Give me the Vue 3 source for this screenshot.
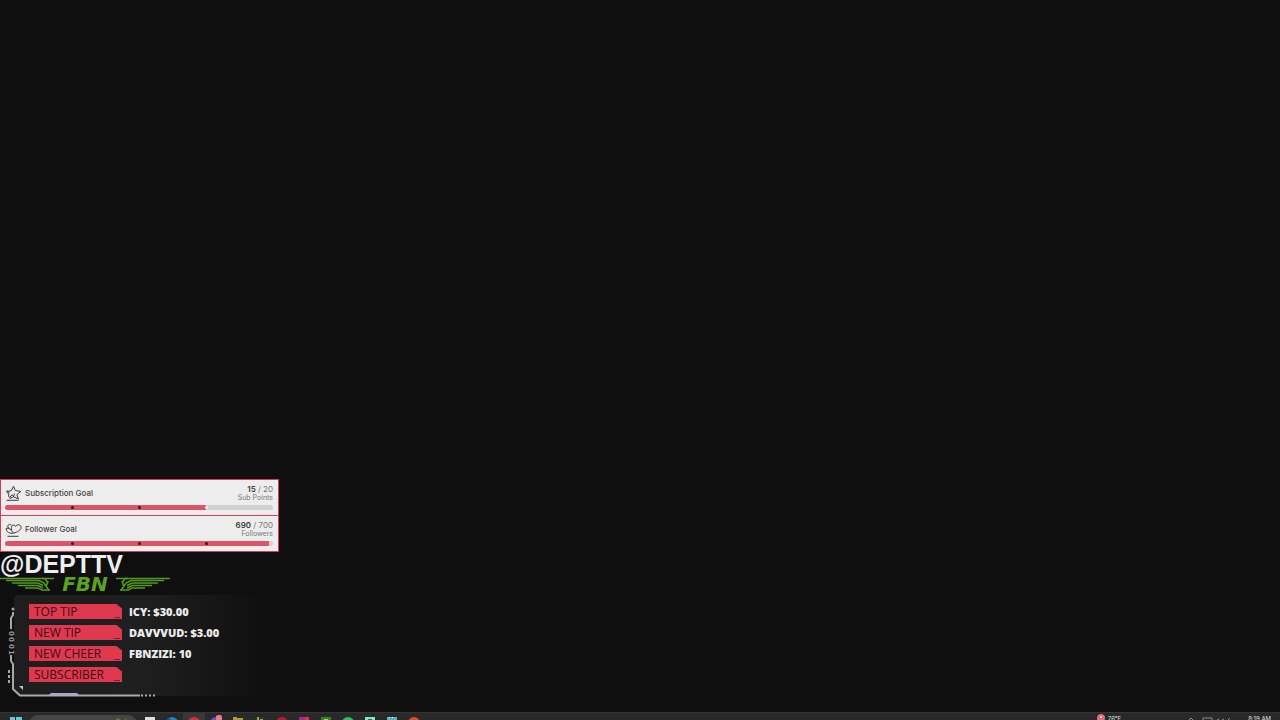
<template>
  <div class="screen">
    <main class="overlay">
      <section class="goals">
        <article v-for="goal in goals" :key="goal.name" class="goal">
          <div class="goal-head">
            <svg v-if="goal.icon === 'star'" class="goal-icon" viewBox="0 0 17 16">
              <path d="M8.5 1.2 10.3 5.6 15.8 6.4 11.8 9.8 13.6 14 8.6 11.8 4.6 13.6M1.3 6.8 6.4 5.6 8.5 1.2" />
              <path d="M1.8 7.6C3.6 8 4.2 9.2 3.4 11L4.8 12.6 7 9.6 8.6 11.6 9.6 8.6M2.2 5.4 4.4 8.2M1.5 15.3H13.5" />
            </svg>
            <svg v-else class="goal-icon" viewBox="0 0 17 16">
              <path d="M8.6 12.2C6.8 10.6 6 8.6 6.4 6.4 7 3.6 9.6 3.4 10.6 5.4 12.2 2.8 15.8 3.5 16.1 6.3 16.1 9.2 12.3 11 8.6 12.2Z" />
              <path d="M6.6 4.2C4.8 2.4 2.4 3.8 2.8 6L4 7.4 1.2 7.2C1 10 2.8 11.8 5.4 12.2L8.4 12.2M4 7.4 6.2 9.2M2.5 15.3H13.5" />
            </svg>
            <h2 class="goal-name">{{ goal.name }}</h2>
            <div class="goal-count">
              <div class="goal-numbers"><b>{{ goal.current }}</b> / {{ goal.target }}</div>
              <div class="goal-unit">{{ goal.unit }}</div>
            </div>
          </div>
          <div class="bar">
            <div class="bar-fill" :style="{ width: (goal.current / goal.target) * 100 + '%' }"></div>
            <span
              v-for="mark in [25, 50, 75]"
              :key="mark"
              class="bar-dot"
              :class="{ reached: (goal.current / goal.target) * 100 <= mark }"
              :style="{ left: mark + '%' }"
            ></span>
          </div>
        </article>
      </section>

      <h1 class="handle">@DEPTTV</h1>

      <div class="team">
        <svg v-for="side in ['left', 'right']" :key="side" class="wing" :class="side" viewBox="0 0 56 16">
          <path d="M0 2.500H45L48 7" />
          <path d="M6 4.500H39L44 7" />
          <path d="M12 7H38L43 9.500" />
          <path d="M18 9.500H38L43 12" />
          <path d="M25 12H38L42 14H50" />
          <path d="M42 2.500H54M44 7 49 14.500M48 5 46 11" />
        </svg>
        <strong class="team-name">FBN</strong>
      </div>

      <section class="panel">
        <svg class="frame" viewBox="0 0 280 110">
          <defs>
            <linearGradient id="panelFade">
              <stop offset="0" stop-color="#1e1e1f" />
              <stop offset="0.5" stop-color="#1f1f20" />
              <stop offset="1" stop-color="#0f0f0f" />
            </linearGradient>
          </defs>
          <path d="M17 3H265V104H20L14 97V6Z" fill="url(#panelFade)" />
          <circle cx="13" cy="17" r="1.5" fill="#a9a9ad" />
          <path class="line" d="M13 20V23L11 26V37M11 63V69L13 72V97L20 103.500H140" />
          <path class="line" d="M141 103.500H155" stroke-dasharray="2 2" />
          <path class="line" d="M9 78V91" stroke-dasharray="3 2" />
          <path d="M48 104 51 101H77L80 104Z" fill="#aba7c6" />
          <path d="M19 94H23V98Z" fill="#c4c4c8" />
          <text class="code" transform="translate(9 39) rotate(90)" x="0 6 13 19" y="0">0001</text>
        </svg>
        <dl class="stats">
          <div v-for="stat in stats" :key="stat.label" class="stat">
            <dt>{{ stat.label }}</dt>
            <dd>{{ stat.value }}</dd>
          </div>
        </dl>
      </section>
    </main>

    <footer class="taskbar">
      <button class="app" aria-label="Start">
        <svg viewBox="0 0 12 12"><path d="M0 0H5V5H0ZM6 0H12V5H6ZM0 6H5V12H0ZM6 6H12V12H6Z" fill="#62cbd0" /></svg>
      </button>
      <button class="search" aria-label="Search">
        <svg viewBox="0 0 108 14">
          <circle cx="8" cy="6" r="2.500" fill="none" stroke="#bdbdbd" />
          <path d="M85 4 89 1 93 4 97 2 100 5V9H85Z" fill="#8b6a2c" />
          <path d="M94 3H100V6H94Z" fill="#55606a" />
        </svg>
      </button>
      <button v-for="app in apps" :key="app.name" class="app" :class="{ open: app.open }" :aria-label="app.name">
        <svg viewBox="0 0 12 12">
          <circle v-if="app.round" cx="6" cy="6" r="6" :fill="app.color" />
          <path v-else d="M1 0H11V12H1Z" :fill="app.color" />
          <path v-if="app.detail" :d="app.detail" :fill="app.accent" />
        </svg>
      </button>
      <button class="weather">
        <svg viewBox="0 0 10 10">
          <circle cx="5" cy="5" r="4" fill="#db6d83" />
          <path d="M4 3H6V5H4Z" fill="#f3c3cb" />
        </svg>
        <span>76°F</span>
      </button>
      <div class="tray">
        <svg viewBox="0 0 46 8">
          <path d="M2 4 4 2 6 4M16 2H25V5H16ZM30 4 32 3M35 4 37 3M41 4 43 2" />
        </svg>
        <time>8:19 AM</time>
      </div>
    </footer>
  </div>
</template>

<script setup>
const goals = [
  { name: 'Subscription Goal', icon: 'star', current: 15, target: 20, unit: 'Sub Points' },
  { name: 'Follower Goal', icon: 'heart', current: 690, target: 700, unit: 'Followers' }
]

const stats = [
  { label: 'TOP TIP', value: 'ICY: $30.00' },
  { label: 'NEW TIP', value: 'DAVVVUD: $3.00' },
  { label: 'NEW CHEER', value: 'FBNZIZI: 10' },
  { label: 'SUBSCRIBER', value: '' }
]

const apps = [
  { name: 'Task view', color: '#dededc' },
  { name: 'Edge', color: '#2482bd', round: true, detail: 'M1 3 4 1V4Z', accent: '#1a4a70' },
  { name: 'Opera', color: '#d6303f', round: true, open: true },
  { name: 'Chat', color: '#6657bb', round: true, detail: 'M6-1 8-2H11L12 0V3H6Z', accent: '#e77b8b' },
  { name: 'Files', color: '#b7963b', detail: 'M5 0H11V1H5Z', accent: '#2a2a2a' },
  { name: 'Editor', color: '#303030', detail: 'M3 0H5V8H3ZM6 2H9V4H6Z', accent: '#a69850' },
  { name: 'Music', color: '#c01431', round: true },
  { name: 'Video', color: '#a32a86', detail: 'M7 0H11V4H7Z', accent: '#d33a51' },
  { name: 'Games', color: '#367f28', detail: 'M4 2H8V4H4Z', accent: '#9dcf83' },
  { name: 'Spotify', color: '#35bd69', round: true },
  { name: 'Streamlabs', color: '#80e6c5', detail: 'M4 2H8V4H4Z', accent: '#37685c' },
  { name: 'Notepad', color: '#67aebd', detail: 'M3 0H4V1H3ZM6 0H7V1H6Z', accent: '#d9eef0' },
  { name: 'Recorder', color: '#cf5424', round: true }
]
</script>

<style>
body {
  background: #0f0f0f;
}
</style>

<style scoped>
.screen {
  height: 100vh;
  display: flex;
  flex-direction: column;
  overflow: hidden;
  background: #0f0f0f;
  font-family: Inter, "Liberation Sans", sans-serif;
}

.overlay {
  margin-top: auto;
  width: 280px;
  max-width: 100%;
}

.goals {
  margin-right: 1px;
  border-bottom: 1px solid #d83b58;
}

.goal {
  border: 1px solid #d83b58;
  border-bottom: none;
  padding: 1px 5px 5px 4px;
  background: #eeedee;
}

.goal-head {
  display: flex;
  align-items: center;
  height: 24px;
}

.goal-icon {
  width: 17px;
  height: 16px;
  margin-right: 3px;
  fill: none;
  stroke: #3c3a3b;
  stroke-width: 1;
}

.goal-name {
  margin: 0;
  font-size: 8px;
  line-height: 10px;
  font-weight: 500;
  color: #454345;
}

.goal-count {
  margin-left: auto;
  text-align: right;
  color: #777578;
}

.goal-numbers {
  font-size: 8px;
  line-height: 10px;
}

.goal-numbers b {
  font-weight: 600;
  color: #3c3a3c;
}

.goal-unit {
  font-size: 7px;
  line-height: 8px;
}

.bar {
  position: relative;
  height: 5px;
  border-radius: 3px;
  background: #d1d0d2;
}

.bar-fill {
  height: 100%;
  border-radius: 3px 0 0 3px;
  background: #de5464;
}

.bar-dot {
  position: absolute;
  top: 1px;
  width: 3px;
  height: 3px;
  margin-left: -1px;
  border-radius: 50%;
  background: #2b1519;
}

.bar-dot.reached {
  background: #f7f5f6;
}

.handle {
  margin: 0;
  font: bold 25px/24px "Liberation Sans", Arial, sans-serif;
  color: #eeeeee;
}

.team {
  display: flex;
  width: 170px;
  height: 16px;
}

.wing {
  width: 56px;
  height: 16px;
  fill: none;
  stroke: #56991f;
  stroke-width: 1.5;
}

.wing.right {
  order: 2;
  transform: scaleX(-1);
}

.team-name {
  flex: 1;
  order: 1;
  display: flex;
  justify-content: center;
  font: italic bold 20px/16px "DejaVu Sans", sans-serif;
  color: #5ba31d;
}

.panel {
  position: relative;
  padding: 12px 8px 20px 29px;
  margin-bottom: 10px;
}

.frame {
  position: absolute;
  top: 0;
  left: 0;
  width: 280px;
  height: 110px;
}

.line {
  fill: none;
  stroke: #a9a9ad;
  stroke-width: 2;
}

.code {
  font: bold 7px "DejaVu Sans", sans-serif;
  fill: #98989c;
}

.stats {
  position: relative;
  display: grid;
  gap: 6px;
  margin: 0;
  font-family: "Open Sans", "Noto Sans", sans-serif;
  font-size: 12px;
  line-height: 15px;
}

.stat {
  display: flex;
  gap: 7px;
}

.stat dt {
  position: relative;
  width: 88px;
  padding-left: 5px;
  background: #e0384f;
  clip-path: polygon(0 0, 94% 0, 100% 30%, 100% 100%, 0 100%);
  color: #3b0e17;
  font-weight: 500;
}

.stat dt::after {
  content: "";
  position: absolute;
  right: 2px;
  bottom: 1px;
  width: 6px;
  height: 1px;
  background: #7d1f2e;
}

.stat dd {
  margin: 0;
  color: #ececec;
  font-size: 11px;
  font-weight: 800;
}

.taskbar {
  display: flex;
  align-items: flex-start;
  height: 8px;
  flex-shrink: 0;
  box-sizing: border-box;
  padding: 0 9px 0 5px;
  overflow: hidden;
  border-top: 1px solid #353535;
  background: #292929;
}

.taskbar button {
  border: none;
  padding: 0;
  background: none;
  flex-shrink: 0;
}

.taskbar .app {
  display: flex;
  align-items: flex-start;
  width: 22px;
  height: 24px;
}

.taskbar .open {
  background: #383838;
}

.app svg {
  width: 12px;
  height: 12px;
  margin: 4px auto 0;
  overflow: visible;
}

.taskbar .search {
  width: 108px;
  height: 18px;
  margin: 2px 2px 0;
  border-radius: 9px;
  background: #454545;
}

.search svg {
  display: block;
  width: 108px;
  height: 14px;
}

.taskbar .weather {
  display: flex;
  align-items: flex-start;
  gap: 2px;
  margin-left: auto;
  color: #e0e0e0;
  font: 6px/8px Inter, sans-serif;
}

.weather svg {
  width: 10px;
  height: 10px;
}

.weather span,
.tray time {
  padding-top: 2px;
}

.tray {
  display: flex;
  margin-left: 66px;
  gap: 15px;
  color: #e0e0e0;
  font-size: 6px;
  line-height: 8px;
}

.tray svg {
  width: 46px;
  height: 8px;
  margin-top: 3px;
  fill: none;
  stroke: #8c8c8c;
}
</style>
